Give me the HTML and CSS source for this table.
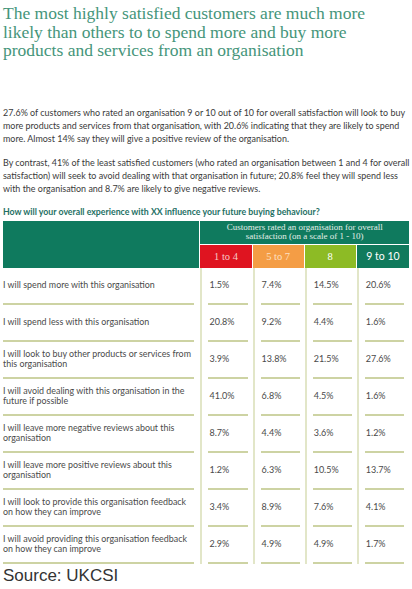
FILE: index.html
```html
<!DOCTYPE html>
<html lang="en">
<head>
<meta charset="UTF-8"/>
<meta name="viewport" content="width=device-width, initial-scale=1.0"/>
<title>UKCSI | Buying behaviour</title>
<link rel="stylesheet" href="styles.css">
</head>
<body>

<h1 class="title">The most highly satisfied customers are much more<br>likely than others to to spend more and buy more<br>products and services from an organisation</h1>

<p class="intro">27.6% of customers who rated an organisation 9 or 10 out of 10 for overall satisfaction will look to buy<br>more products and services from that organisation, with 20.6% indicating that they are likely to spend<br>more. Almost 14% say they will give a positive review of the organisation.</p>

<p class="intro">By contrast, 41% of the least satisfied customers (who rated an organisation between 1 and 4 for overall<br>satisfaction) will seek to avoid dealing with that organisation in future; 20.8% feel they will spend less<br>with the organisation and 8.7% are likely to give negative reviews.</p>

<h2 class="question">How will your overall experience with XX influence your future buying behaviour?</h2>

<table class="survey">
  <colgroup>
    <col class="c-label"><col class="c-val"><col class="c-val"><col class="c-val"><col class="c-val">
  </colgroup>
  <thead>
    <tr>
      <th class="blank" rowspan="2"></th>
      <th class="scale" colspan="4">Customers rated an organisation for overall<br>satisfaction (on a scale of 1 - 10)</th>
    </tr>
    <tr class="bands">
      <th class="b-red">1 to 4</th>
      <th class="b-orange">5 to 7</th>
      <th class="b-lime">8</th>
      <th class="b-green">9 to 10</th>
    </tr>
  </thead>
  <tbody>
    <tr>
      <td class="lbl"><div class="cell">I will spend more with this organisation</div></td>
      <td class="val"><div class="cell">1.5%</div></td>
      <td class="val"><div class="cell">7.4%</div></td>
      <td class="val"><div class="cell">14.5%</div></td>
      <td class="val"><div class="cell">20.6%</div></td>
    </tr>
    <tr>
      <td class="lbl"><div class="cell">I will spend less with this organisation</div></td>
      <td class="val"><div class="cell">20.8%</div></td>
      <td class="val"><div class="cell">9.2%</div></td>
      <td class="val"><div class="cell">4.4%</div></td>
      <td class="val"><div class="cell">1.6%</div></td>
    </tr>
    <tr>
      <td class="lbl"><div class="cell">I will look to buy other products or services from<br>this organisation</div></td>
      <td class="val"><div class="cell">3.9%</div></td>
      <td class="val"><div class="cell">13.8%</div></td>
      <td class="val"><div class="cell">21.5%</div></td>
      <td class="val"><div class="cell">27.6%</div></td>
    </tr>
    <tr>
      <td class="lbl"><div class="cell">I will avoid dealing with this organisation in the<br>future if possible</div></td>
      <td class="val"><div class="cell">41.0%</div></td>
      <td class="val"><div class="cell">6.8%</div></td>
      <td class="val"><div class="cell">4.5%</div></td>
      <td class="val"><div class="cell">1.6%</div></td>
    </tr>
    <tr>
      <td class="lbl"><div class="cell">I will leave more negative reviews about this<br>organisation</div></td>
      <td class="val"><div class="cell">8.7%</div></td>
      <td class="val"><div class="cell">4.4%</div></td>
      <td class="val"><div class="cell">3.6%</div></td>
      <td class="val"><div class="cell">1.2%</div></td>
    </tr>
    <tr>
      <td class="lbl"><div class="cell">I will leave more positive reviews about this<br>organisation</div></td>
      <td class="val"><div class="cell">1.2%</div></td>
      <td class="val"><div class="cell">6.3%</div></td>
      <td class="val"><div class="cell">10.5%</div></td>
      <td class="val"><div class="cell">13.7%</div></td>
    </tr>
    <tr>
      <td class="lbl"><div class="cell">I will look to provide this organisation feedback<br>on how they can improve</div></td>
      <td class="val"><div class="cell">3.4%</div></td>
      <td class="val"><div class="cell">8.9%</div></td>
      <td class="val"><div class="cell">7.6%</div></td>
      <td class="val"><div class="cell">4.1%</div></td>
    </tr>
    <tr>
      <td class="lbl"><div class="cell">I will avoid providing this organisation feedback<br>on how they can improve</div></td>
      <td class="val"><div class="cell">2.9%</div></td>
      <td class="val"><div class="cell">4.9%</div></td>
      <td class="val"><div class="cell">4.9%</div></td>
      <td class="val"><div class="cell">1.7%</div></td>
    </tr>
  </tbody>
</table>

<p class="source">Source: UKCSI</p>

</body>
</html>
```

FILE: styles.css
```css
*{box-sizing:border-box;margin:0;padding:0;}
body{background:#fff;padding:0 3px;font-family:Lato,'Open Sans',sans-serif;color:#3a3a3a;overflow:hidden;}
.title{font-family:'Liberation Serif',serif;font-weight:normal;font-size:17.5px;line-height:18.5px;color:#45957a;padding-top:4px;}
.intro{font-size:8.95px;line-height:13px;white-space:nowrap;}
.title+.intro{margin-top:46px;}
.intro+.intro{margin-top:11px;}
.question{font-size:8.75px;font-weight:bold;color:#1e7064;margin-top:11px;line-height:12px;}
.survey{border-collapse:separate;border-spacing:0;margin-top:3px;width:406px;table-layout:fixed;}
.c-label{width:197px;}
.c-val{width:52px;}
.survey th{font-weight:normal;color:#fff;}
.blank{background:#0f7a5e;border-right:1px solid #fff;}
.scale{background:#0f7a5e;font-family:'Liberation Serif',serif;font-size:9px;line-height:9px;height:24px;color:#e4efe9 !important;border-bottom:1px solid #fff;}
.bands th{height:23px;font-size:10.5px;border-right:1px solid #fff;}
.bands th:last-child{border-right:none;}
.b-red{background:#df1420;font-family:'Liberation Serif',serif;color:#f6c9c6 !important;}
.b-orange{background:#f49d45;font-family:'Liberation Serif',serif;color:#fde0c4 !important;}
.b-lime{background:#8dbb25;font-family:'Liberation Serif',serif;}
.b-green{background:#107a5c;font-size:10.5px !important;}
.survey td{padding:0;vertical-align:top;}
.cell{height:37px;display:flex;align-items:center;border-bottom:2px solid #cdd3a3;font-size:8.9px;line-height:10px;color:#4a4a4a;}
.lbl{padding-right:6px !important;}
.val{border-left:2px solid #e2e6c8;padding:0 5px 0 6px !important;}
.val .cell{font-size:9px;padding-left:1px;}
.source{font-family:'Liberation Sans',Arial,sans-serif;font-size:17px;color:#333;margin-top:2px;}
```
